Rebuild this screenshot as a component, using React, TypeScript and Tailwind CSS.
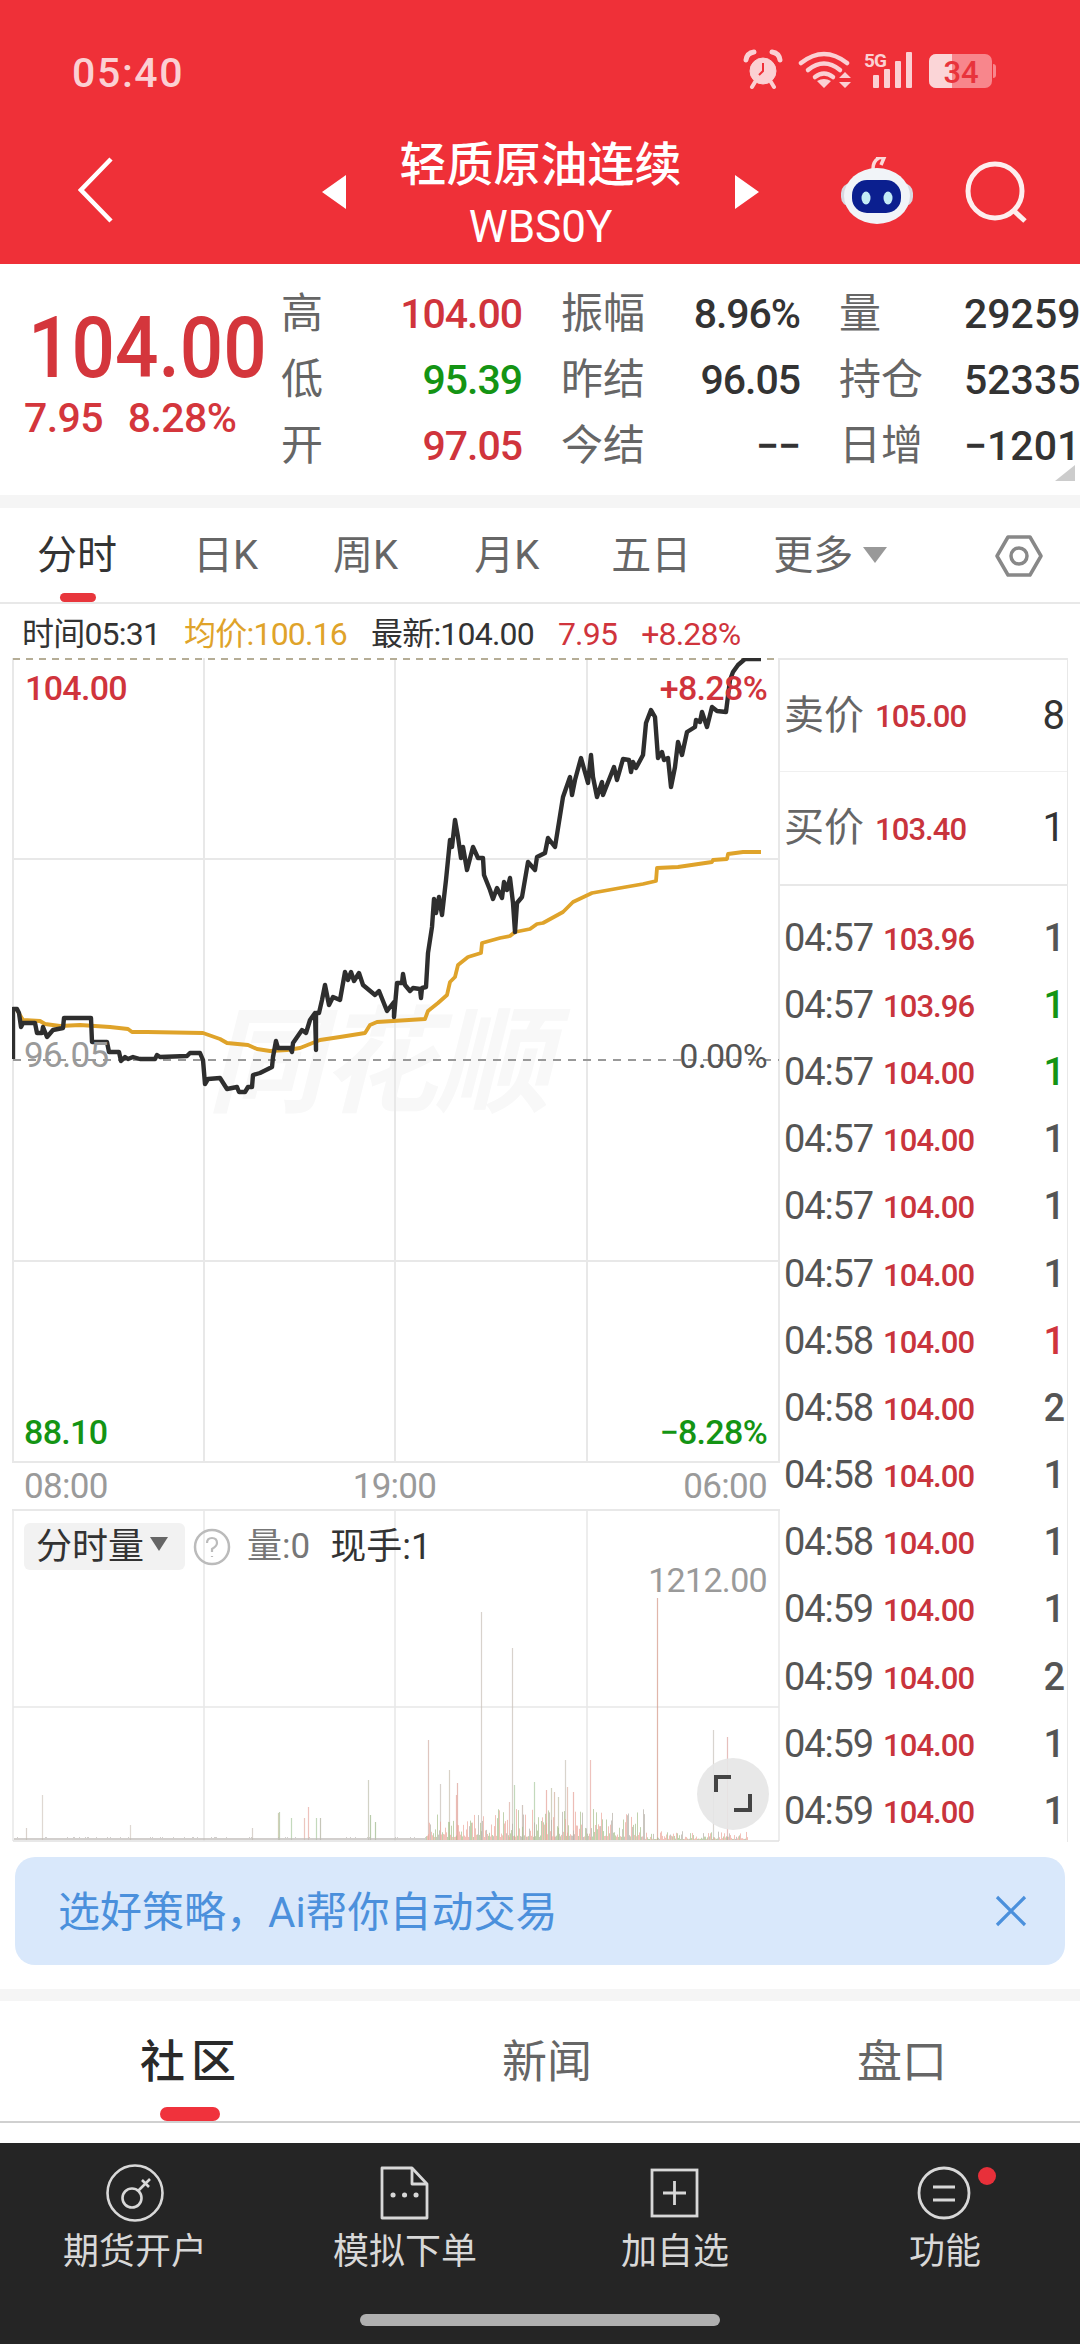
const blackLine =
  "13,1059 13,1009 17,1009 19,1013 21,1027 23,1023 35,1023 37,1033 42,1033 43,1027 47,1037 53,1030 63,1028 64,1018 91,1018 92,1042 107,1042 109,1052 119,1052 121,1061 125,1057 128,1059 133,1057 140,1059 155,1059 157,1055 160,1057 187,1056 190,1053 200,1053 203,1060 205,1084 208,1079 220,1078 227,1089 237,1087 239,1092 245,1092 248,1087 252,1087 253,1075 260,1073 272,1067 273,1057 276,1041 278,1048 290,1048 292,1052 293,1043 302,1030 306,1033 310,1020 315,1013 316,1050 316,1013 319,1013 322,1000 325,985 329,1005 333,997 340,1000 345,972 348,980 351,972 354,981 359,973 363,985 375,995 379,991 387,1011 394,1002 394,1017 397,983 402,983 403,974 405,985 410,991 413,988 420,989 421,998 422,988 426,987 428,953 432,927 434,899 436,913 439,897 442,915 446,880 450,840 452,847 455,820 458,837 461,858 463,847 467,870 473,847 478,858 483,858 484,875 490,890 493,899 497,888 502,898 504,882 507,890 510,878 513,903 515,932 517,903 522,897 528,862 535,870 537,857 545,853 548,838 555,847 559,822 563,797 570,777 572,795 575,780 581,758 588,783 591,755 593,777 597,797 602,782 603,795 614,767 617,780 623,759 629,760 631,772 633,762 636,768 643,755 646,723 651,710 655,717 658,758 662,752 664,760 668,758 671,787 675,767 678,742 682,755 687,732 695,727 696,720 700,722 702,712 707,727 712,707 717,711 726,712 730,680 733,672 738,665 745,659 761,659"

const goldLine =
  "17,1010 23,1020 40,1021 45,1024 60,1026 80,1025 110,1027 128,1029 132,1032 147,1032 203,1033 220,1039 227,1043 248,1045 257,1049 270,1051 287,1050 300,1048 320,1040 340,1037 365,1033 370,1025 377,1022 425,1019 428,1011 438,1003 447,995 450,982 455,977 458,965 468,957 481,953 482,943 500,938 510,936 515,932 530,929 537,924 543,923 563,912 573,902 592,893 620,888 643,884 656,881 657,868 678,867 712,862 713,860 727,859 728,854 743,852 761,852"

const tallBars = [
  [657, 1598, "#d9a595"], [481, 1612, "#cfc7c0"], [512, 1648, "#cfc7c0"], [428, 1740, "#d8b8b0"],
  [713, 1730, "#cfcac4"], [727, 1737, "#e0b0ac"], [565, 1760, "#cfcac0"], [590, 1760, "#eab3ad"],
  [368, 1780, "#c8c8b8"], [449, 1770, "#cfc7b8"], [440, 1784, "#cfc7c0"], [457, 1783, "#e0aca4"],
  [534, 1782, "#b5d0ac"], [514, 1785, "#b5d0ac"], [546, 1790, "#e8aca4"], [551, 1788, "#c8c8b0"],
  [554, 1792, "#d8b8a8"], [558, 1797, "#c8c8b0"], [567, 1787, "#e0bcb0"], [573, 1792, "#e8aca4"],
  [522, 1805, "#c8b8b0"], [509, 1802, "#e0b8b0"], [456, 1795, "#e8aca4"], [308, 1807, "#eab3ad"],
  [279, 1812, "#b5c8a8"], [291, 1818, "#b5d0ac"], [304, 1818, "#e8b8b0"], [316, 1818, "#b5d0ac"],
  [320, 1818, "#b8b8a8"], [42, 1795, "#d8cfc8"], [26, 1828, "#d0c8c0"], [130, 1825, "#d8cfc8"],
  [252, 1828, "#d0c8c0"], [278, 1813, "#c8c8a8"], [370, 1815, "#a8c098"], [375, 1822, "#a8c098"],
] as const

function noiseBars() {
  const bars: { x: number; h: number; c: string }[] = []
  let seed = 17
  const next = () => {
    seed = (seed * 1103 + 12345) % 65536
    return seed / 65536
  }
  for (let x = 14; x < 748; x += 1) {
    const r = next()
    const dense = x > 425 && x < 645
    const mid = x >= 645 && x < 748
    const h = dense ? 3 + r * r * 28 : mid ? 1 + r * r * 8 : r > 0.9 ? 3 : 2
    const pick = next()
    const c = pick < 0.45 ? "#eda79c" : pick < 0.8 ? "#a8c08c" : "#b5aea6"
    bars.push({ x, h, c: dense || mid ? c : "#c0bcb8" })
  }
  return bars
}

const bars = noiseBars()

const trades = [
  ["04:57", "103.96", "1", "text-[#555555]"],
  ["04:57", "103.96", "1", "text-[#149414]"],
  ["04:57", "104.00", "1", "text-[#149414]"],
  ["04:57", "104.00", "1", "text-[#555555]"],
  ["04:57", "104.00", "1", "text-[#555555]"],
  ["04:57", "104.00", "1", "text-[#555555]"],
  ["04:58", "104.00", "1", "text-[#d0343c]"],
  ["04:58", "104.00", "2", "text-[#555555]"],
  ["04:58", "104.00", "1", "text-[#555555]"],
  ["04:58", "104.00", "1", "text-[#555555]"],
  ["04:59", "104.00", "1", "text-[#555555]"],
  ["04:59", "104.00", "2", "text-[#555555]"],
  ["04:59", "104.00", "1", "text-[#555555]"],
  ["04:59", "104.00", "1", "text-[#555555]"],
]

function QuoteCell({ label, value, color, wide }: { label: string; value: string; color: string; wide?: boolean }) {
  return (
    <div className="flex items-center justify-between">
      <span className={`text-[42px] leading-none text-[#666666] ${wide ? "w-[125px] shrink-0" : ""}`}>{label}</span>
      <span className={`text-[41px] font-medium leading-none ${wide ? "flex-1 whitespace-nowrap" : "tracking-[-0.025em]"} ${color}`}>{value}</span>
    </div>
  )
}

function StatusIcons() {
  return (
    <svg width="260" height="44" viewBox="740 52 260 44" className="mt-[-1px]">
      {/* alarm */}
      <g fill="none" stroke="#fbd0d3">
        <circle cx="763" cy="75" r="13" fill="#fbd0d3" />
        <path d="M763 67v8l-4 4" stroke="#ef3038" strokeWidth="2" />
        <path d="M746 64q1-7 8-8M780 64q-1-7-8-8" strokeWidth="5" strokeLinecap="round" />
        <path d="M752 91l3-5M774 91l-3-5" strokeWidth="4" strokeLinecap="round" />
      </g>
      {/* wifi */}
      <g fill="none" stroke="#fbd0d3" strokeWidth="4.5" strokeLinecap="round">
        <path d="M801 67q23-18 46 0" />
        <path d="M808 74q16-13 32 0" />
        <path d="M815 81q9-7 18 0" />
      </g>
      <path d="M824 92l-7-7q7-4 14 0zM845 76l6 6h-12zM845 92l6-6h-12z" fill="#fbd0d3" />
      {/* signal */}
      <text x="864" y="71" fontSize="19" fontWeight="700" fill="#fbd0d3" fontFamily="Roboto, sans-serif" letterSpacing="-1">5G</text>
      <rect x="873" y="79" width="6" height="13" rx="1" fill="#fbd0d3" />
      <rect x="884" y="73" width="6" height="19" rx="1" fill="#fbd0d3" />
      <rect x="895" y="65" width="6" height="27" rx="1" fill="#fbd0d3" />
      <rect x="906" y="56" width="6" height="36" rx="1" fill="#fbd0d3" />
      {/* battery */}
      <rect x="929" y="58" width="63" height="34" rx="7" fill="#f8868c" />
      <path d="M936 58h16v34h-16a7 7 0 0 1-7-7v-20a7 7 0 0 1 7-7z" fill="#fbd5d7" />
      <path d="M993 68q3 0 3 3v8q0 3-3 3z" fill="#f8868c" />
      <text x="961" y="87" textAnchor="middle" fontSize="31" fontWeight="500" fill="#e8333b" fontFamily="Roboto, sans-serif">34</text>
    </svg>
  )
}

function PriceChart() {
  const grid = "#e8e8e8"
  return (
    <div className="relative h-[803px] w-[768px] overflow-hidden">
      <span className="absolute left-[195px] top-[330px] text-[116px] font-bold italic leading-[150px] tracking-[-2px] whitespace-nowrap text-[#f8f8f8]">
        同花顺
      </span>
      <svg className="absolute inset-0" width="768" height="803" viewBox="12 658 768 803">
        <path d="M13 658V1461M204 658V1461M395 658V1461M587 658V1461M779 658V1461M13 859H779M13 1261H779" stroke={grid} strokeWidth="2" fill="none" />
        <path d="M13 659H779" stroke="#b5ad96" strokeWidth="2" strokeDasharray="7 6" />
        <path d="M13 1060H779" stroke="#999999" strokeWidth="2" strokeDasharray="8 7" />
        <polyline points={goldLine} fill="none" stroke="#dfa32a" strokeWidth="3.8" strokeLinejoin="round" />
        <polyline points={blackLine} fill="none" stroke="#2e2e2e" strokeWidth="4.4" strokeLinejoin="round" />
      </svg>
      <span className="absolute left-[13px] top-[8px] text-[34px] font-medium leading-[44px] tracking-[-0.02em] text-[#d0343c]">104.00</span>
      <span className="absolute right-[13px] top-[8px] text-[34px] font-medium leading-[44px] tracking-[-0.02em] text-[#d0343c]">+8.28%</span>
      <span className="absolute left-[12px] top-[376px] text-[35px] leading-[44px] tracking-[-0.02em] text-[#9a9a9a]">96.05</span>
      <span className="absolute right-[13px] top-[376px] text-[34px] leading-[44px] tracking-[-0.02em] text-[#555555]">0.00%</span>
      <span className="absolute left-[12px] top-[752px] text-[34px] font-medium leading-[44px] tracking-[-0.02em] text-[#149414]">88.10</span>
      <span className="absolute right-[13px] top-[752px] text-[34px] font-medium leading-[44px] tracking-[-0.02em] text-[#149414]">−8.28%</span>
    </div>
  )
}

function VolumeChart() {
  const grid = "#e8e8e8"
  return (
    <div className="relative h-[331px] w-[768px] overflow-hidden">
      <svg className="absolute inset-0" width="768" height="331" viewBox="12 1511 768 331">
        <path d="M13 1511V1841M204 1511V1841M395 1511V1841M587 1511V1841M779 1511V1841M13 1707H779" stroke={grid} strokeWidth="1.5" fill="none" />
        <path d="M13 1841H779" stroke="#e0e0e0" strokeWidth="1.5" />
        {tallBars.map(([x, top, c]) => (
          <path key={`${x}-${top}`} d={`M${x + 0.5} ${top}V1840`} stroke={c} strokeWidth="1.2" opacity="0.8" />
        ))}
        {bars.map((b) => (
          <path key={b.x} d={`M${b.x + 0.5} ${1840 - b.h}V1840`} stroke={b.c} strokeWidth="1" opacity="0.7" />
        ))}
      </svg>
      <div className="absolute left-[12px] top-[12px] flex items-center">
        <div className="flex h-[47px] w-[161px] items-center rounded-[6px] bg-[#f2f2f2] pl-[12px]">
          <span className="text-[36px] leading-none text-[#333333]">分时量</span>
          <svg width="18" height="14" viewBox="0 0 18 14" className="ml-[6px] mt-[-6px]">
            <path d="M0 0H18L9 14Z" fill="#666666" />
          </svg>
        </div>
        <svg width="38" height="38" viewBox="0 0 38 38" className="ml-[8px]">
          <circle cx="19" cy="19" r="17" fill="none" stroke="#bbbbbb" strokeWidth="2.5" />
          <path d="M14 15q0-5 5-5t5 5q0 3-5 6v3M19 28v1" fill="none" stroke="#bbbbbb" strokeWidth="2.2" />
        </svg>
        <span className="ml-[16px] text-[35px] leading-none text-[#777777]">量:0</span>
        <span className="ml-[20px] text-[36px] leading-none text-[#333333]">现手:1</span>
      </div>
      <span className="absolute right-[13px] top-[47px] text-[34px] leading-[44px] tracking-[-0.02em] text-[#9a9a9a]">1212.00</span>
      <div className="absolute left-[685px] top-[247px] flex h-[72px] w-[72px] items-center justify-center rounded-full bg-[#e6e6e6]/90">
        <svg width="40" height="40" viewBox="0 0 40 40" fill="none" stroke="#444444" strokeWidth="4">
          <path d="M18 3H3V18" />
          <path d="M37 20V36H21" />
        </svg>
      </div>
    </div>
  )
}

export default function App() {
  return (
    <div className="relative h-[2344px] w-[1080px] overflow-hidden bg-white font-[Roboto,'Noto_Sans_CJK_SC',sans-serif]">
      <header className="h-[264px] bg-[#ef3038] text-white">
        <div className="flex h-[124px] items-start justify-between pl-[72px] pr-[80px] pt-[49px]">
          <span className="text-[41px] font-medium leading-[48px] tracking-[0.04em] text-[#fbd0d3]">05:40</span>
          <StatusIcons />
        </div>
        <div className="flex h-[140px] items-start pl-[78px]">
          <svg width="36" height="66" viewBox="0 0 36 66" fill="none" stroke="#ffffff" strokeWidth="4.5" className="mt-[33px]">
            <path d="M33 2L3 33L33 64" />
          </svg>
          <svg width="24" height="34" viewBox="0 0 24 34" className="ml-[208px] mt-[51px]">
            <path d="M24 0V34L0 17Z" fill="#ffffff" />
          </svg>
          <div className="flex w-[389px] flex-col items-center pt-[10px]">
            <span className="text-[47px] font-medium leading-[62px]">轻质原油连续</span>
            <span className="text-[44px] leading-[62px]">WBS0Y</span>
          </div>
          <svg width="24" height="34" viewBox="0 0 24 34" className="mt-[51px]">
            <path d="M0 0V34L24 17Z" fill="#ffffff" />
          </svg>
          <svg width="76" height="68" viewBox="838 157 76 68" className="ml-[80px] mt-[33px]">
            <path d="M872 169q0-8 6-11m-3-1l8 1l-3 7" fill="none" stroke="#fbd9d9" strokeWidth="3.5" />
            <rect x="840" y="183" width="72" height="24" rx="10" fill="#d8d8e0" />
            <ellipse cx="876" cy="196" rx="33" ry="28" fill="#f1f4f8" />
            <rect x="851" y="180" width="49" height="33" rx="15" fill="#0b1f8f" />
            <ellipse cx="865" cy="198" rx="4.5" ry="6.5" fill="#c4ecf6" />
            <ellipse cx="887" cy="198" rx="4.5" ry="6.5" fill="#c4ecf6" />
          </svg>
          <svg width="62" height="66" viewBox="964 160 62 66" fill="none" stroke="#fdeeee" strokeWidth="5" className="ml-[50px] mt-[36px]">
            <circle cx="994" cy="191" r="27" />
            <path d="M1012 210L1024 221" />
          </svg>
        </div>
      </header>

      <section className="relative flex h-[231px] border-b-[13px] border-[#f5f5f5] box-content">
        <div className="w-[281px] shrink-0">
          <div className="ml-[28px] mt-[47px] origin-left scale-x-[.89] whitespace-nowrap text-[86px] font-medium leading-[74px] text-[#d4363c]">104.00</div>
          <div className="ml-[24px] mt-[8px] flex gap-[25px] text-[41px] font-medium leading-[50px] tracking-[-0.015em] text-[#d4363c]">
            <span>7.95</span>
            <span>8.28%</span>
          </div>
        </div>
        <div className="grid w-[799px] grid-cols-[241px_239px_241px] grid-rows-[66px_66px_66px] gap-x-[39px] pt-[17px]">
          <QuoteCell label="高" value="104.00" color="text-[#d0343c]" />
          <QuoteCell label="振幅" value="8.96%" color="text-[#333333]" />
          <QuoteCell label="量" value="29259" color="text-[#333333]" wide />
          <QuoteCell label="低" value="95.39" color="text-[#149414]" />
          <QuoteCell label="昨结" value="96.05" color="text-[#333333]" />
          <QuoteCell label="持仓" value="52335" color="text-[#333333]" wide />
          <QuoteCell label="开" value="97.05" color="text-[#d0343c]" />
          <QuoteCell label="今结" value="−−" color="text-[#333333]" />
          <QuoteCell label="日增" value="−1201" color="text-[#333333]" wide />
        </div>
        <svg width="20" height="16" viewBox="0 0 20 16" className="absolute left-[1055px] top-[201px]">
          <path d="M20 0V16H0Z" fill="#cccccc" />
        </svg>
      </section>

      <nav className="relative flex h-[96px] items-start border-b-2 border-[#e8e8e8] pl-[37px] pt-[21px] text-[40px] leading-[54px] text-[#666666]">
        <span className="text-[#333333]">分时</span>
        <span className="ml-[76px]">日K</span>
        <span className="ml-[75px]">周K</span>
        <span className="ml-[76px]">月K</span>
        <span className="ml-[72px]">五日</span>
        <span className="ml-[82px]">更多</span>
        <svg width="24" height="16" viewBox="0 0 24 16" className="ml-[10px] mt-[18px]">
          <path d="M0 0H24L12 16Z" fill="#999999" />
        </svg>
        <svg width="50" height="44" viewBox="995 534 48 44" fill="none" stroke="#888888" strokeWidth="3.5" strokeLinejoin="round" className="ml-[107px] mt-[5px]">
          <path d="M997 556L1008 537H1030L1041 556L1030 575H1008Z" />
          <circle cx="1019" cy="556" r="8" />
        </svg>
        <span className="absolute bottom-0 left-[60px] h-[9px] w-[36px] rounded-full bg-[#e8363c]" />
      </nav>

      <div className="flex h-[54px] items-center gap-[24px] pl-[22px] pt-[5px] text-[32px] leading-none tracking-[-0.025em] whitespace-nowrap">
        <span className="text-[#333333]">时间05:31</span>
        <span className="text-[#dfa32a]">均价:100.16</span>
        <span className="text-[#333333]">最新:104.00</span>
        <span className="text-[#d0343c]">7.95</span>
        <span className="text-[#d0343c]">+8.28%</span>
      </div>

      <div className="flex h-[1184px]">
        <div className="w-[780px] shrink-0 pl-[12px]">
          <PriceChart />
          <div className="flex h-[50px] items-center justify-between border-y-2 border-[#e8e8e8] pl-[12px] pr-[13px] text-[35px] leading-none tracking-[-0.02em] text-[#9a9a9a]">
            <span>08:00</span>
            <span className="ml-[-2px]">19:00</span>
            <span>06:00</span>
          </div>
          <VolumeChart />
        </div>
        <div className="h-[1184px] w-[288px] shrink-0 border-r border-t-2 border-[#e8e8e8]">
          <div className="flex h-[112px] items-center justify-between border-b border-[#f0f0f0] pl-[4px] pr-[2px]">
            <span className="flex items-center">
              <span className="text-[40px] leading-none text-[#666666]">卖价</span>
              <span className="ml-[11px] mt-[2px] text-[31px] font-medium leading-none tracking-[-0.03em] text-[#c9343c]">105.00</span>
            </span>
            <span className="text-[40px] leading-none text-[#333333]">8</span>
          </div>
          <div className="flex h-[114px] items-center justify-between border-b-2 border-[#e8e8e8] pl-[4px] pr-[2px]">
            <span className="flex items-center">
              <span className="text-[40px] leading-none text-[#666666]">买价</span>
              <span className="ml-[11px] mt-[2px] text-[31px] font-medium leading-none tracking-[-0.03em] text-[#c9343c]">103.40</span>
            </span>
            <span className="text-[40px] leading-none text-[#333333]">1</span>
          </div>
          <div className="pl-[4px] pt-[18px]">
            {trades.map(([time, price, qty, color], i) => (
              <div key={i} className="flex h-[67.2px] items-center justify-between pr-[2px]">
                <span className="flex items-center">
                  <span className="w-[99px] text-[38px] leading-none tracking-[-0.03em] text-[#555555]">{time}</span>
                  <span className="mt-[3px] text-[31px] font-medium leading-none tracking-[-0.03em] text-[#c9343c]">{price}</span>
                </span>
                <span className={`text-[38px] font-medium leading-none ${color}`}>{qty}</span>
              </div>
            ))}
          </div>
        </div>
      </div>

      <div className="mx-[15px] mt-[15px] flex h-[108px] items-center justify-between rounded-[20px] bg-[#d9e8fb] pl-[43px] pr-[38px]">
        <span className="pt-[3px] text-[42px] leading-none text-[#4b90dc]">选好策略，Ai帮你自动交易</span>
        <svg width="32" height="32" viewBox="0 0 32 32" fill="none" stroke="#4b90dc" strokeWidth="3.2">
          <path d="M2 2L30 30M30 2L2 30" />
        </svg>
      </div>

      <div className="mt-[24px] h-[12px] bg-[#f5f5f5]" />

      <div className="relative flex h-[122px] items-center border-b-2 border-[#d0d0d0] pt-[3px] text-[45px] leading-none text-[#666666]">
        <span className="ml-[140px] font-medium tracking-[6px] text-[#2a2a2a]">社区</span>
        <span className="ml-[260px]">新闻</span>
        <span className="ml-[265px]">盘口</span>
        <span className="absolute bottom-0 left-[160px] h-[14px] w-[60px] rounded-full bg-[#f0323c]" />
      </div>

      <div className="mt-[20px] h-[201px] bg-[#252525]">
        <div className="grid grid-cols-4 pt-[20px] text-[#d8d8d8]">
          <div className="flex flex-col items-center">
            <svg width="60" height="60" viewBox="104 2163 60 60" fill="none" stroke="#d8d8d8" strokeWidth="2.6">
              <circle cx="134" cy="2193" r="27.5" />
              <circle cx="131" cy="2198" r="9.5" />
              <path d="M137 2191L149 2179M141 2180L148 2187" />
            </svg>
            <span className="text-[36px] leading-[58px]">期货开户</span>
          </div>
          <div className="flex flex-col items-center">
            <svg width="60" height="60" viewBox="375 2163 60 60" fill="none" stroke="#d8d8d8" strokeWidth="2.8" strokeLinejoin="round">
              <path d="M382 2168H412L427 2184V2218H382Z" />
              <path d="M412 2168V2184H427" />
              <path d="M393 2195h.1M404.500 2195h.1M416 2195h.1" strokeWidth="5" strokeLinecap="round" />
            </svg>
            <span className="text-[36px] leading-[58px]">模拟下单</span>
          </div>
          <div className="flex flex-col items-center">
            <svg width="60" height="60" viewBox="645 2163 60 60" fill="none" stroke="#d8d8d8" strokeWidth="2.8">
              <rect x="652" y="2170" width="45" height="46" />
              <path d="M674.500 2181V2205M663 2193H686" />
            </svg>
            <span className="text-[36px] leading-[58px]">加自选</span>
          </div>
          <div className="relative flex flex-col items-center">
            <svg width="60" height="60" viewBox="915 2163 60 60" fill="none" stroke="#d8d8d8" strokeWidth="2.8">
              <circle cx="944" cy="2193" r="25" />
              <path d="M933 2187H955M933 2200H955" />
            </svg>
            <span className="text-[36px] leading-[58px]">功能</span>
            <span className="absolute left-[168px] top-[4px] h-[18px] w-[18px] rounded-full bg-[#e8303a]" />
          </div>
        </div>
        <div className="mx-auto mt-[33px] h-[12px] w-[360px] rounded-full bg-[#b0b0b0]" />
      </div>
    </div>
  )
}
